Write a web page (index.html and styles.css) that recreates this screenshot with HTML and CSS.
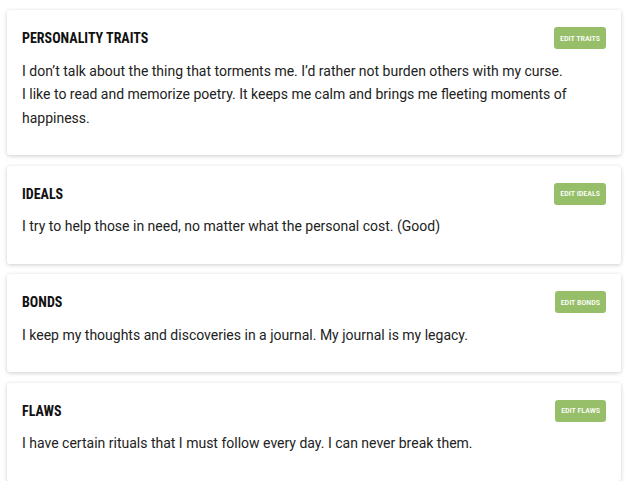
FILE: index.html
```html
<!DOCTYPE html>
<html>
<head>
<meta charset="utf-8">
<link rel="stylesheet" href="styles.css">
</head>
<body>
<div class="list">
  <section class="card">
    <div class="card-head">
      <h2 class="title">PERSONALITY TRAITS</h2>
      <button class="edit">EDIT TRAITS</button>
    </div>
    <p class="text">I don’t talk about the thing that torments me. I’d rather not burden others with my curse.<br>I like to read and memorize poetry. It keeps me calm and brings me fleeting moments of happiness.</p>
  </section>
  <section class="card">
    <div class="card-head">
      <h2 class="title">IDEALS</h2>
      <button class="edit">EDIT IDEALS</button>
    </div>
    <p class="text">I try to help those in need, no matter what the personal cost. (Good)</p>
  </section>
  <section class="card">
    <div class="card-head">
      <h2 class="title">BONDS</h2>
      <button class="edit">EDIT BONDS</button>
    </div>
    <p class="text">I keep my thoughts and discoveries in a journal. My journal is my legacy.</p>
  </section>
  <section class="card">
    <div class="card-head">
      <h2 class="title">FLAWS</h2>
      <button class="edit">EDIT FLAWS</button>
    </div>
    <p class="text">I have certain rituals that I must follow every day. I can never break them.</p>
  </section>
</div>
</body>
</html>
```
FILE: styles.css
```css
html, body {
  margin: 0;
  padding: 0;
  background: #ffffff;
}
body {
  font-family: Roboto, "Liberation Sans", sans-serif;
  color: #222222;
}
.list {
  display: flex;
  flex-direction: column;
  gap: 10.5px;
  padding: 10px 9px 0 7px;
}
.card {
  background: #ffffff;
  border-radius: 3px;
  box-shadow: 0 1px 4px rgba(0, 0, 0, 0.2);
  padding: 17px 15px 25px 15px;
}
.card-head {
  display: flex;
  align-items: center;
  justify-content: space-between;
  height: 22px;
}
.title {
  margin: 0;
  font-family: "Roboto Condensed", "DejaVu Sans Condensed", Roboto, sans-serif;
  font-stretch: condensed;
  font-weight: 700;
  font-size: 14px;
  color: #111111;
}
.edit {
  height: 22px;
  padding: 0 6px;
  border: none;
  border-radius: 3px;
  background: #97bf6a;
  color: #ffffff;
  font-family: "Roboto Condensed", "DejaVu Sans Condensed", Roboto, sans-serif;
  font-stretch: condensed;
  font-weight: 500;
  font-size: 8px;
}
.text {
  margin: 10.5px 0 0 0;
  font-size: 14px;
  line-height: 23.5px;
}
```
